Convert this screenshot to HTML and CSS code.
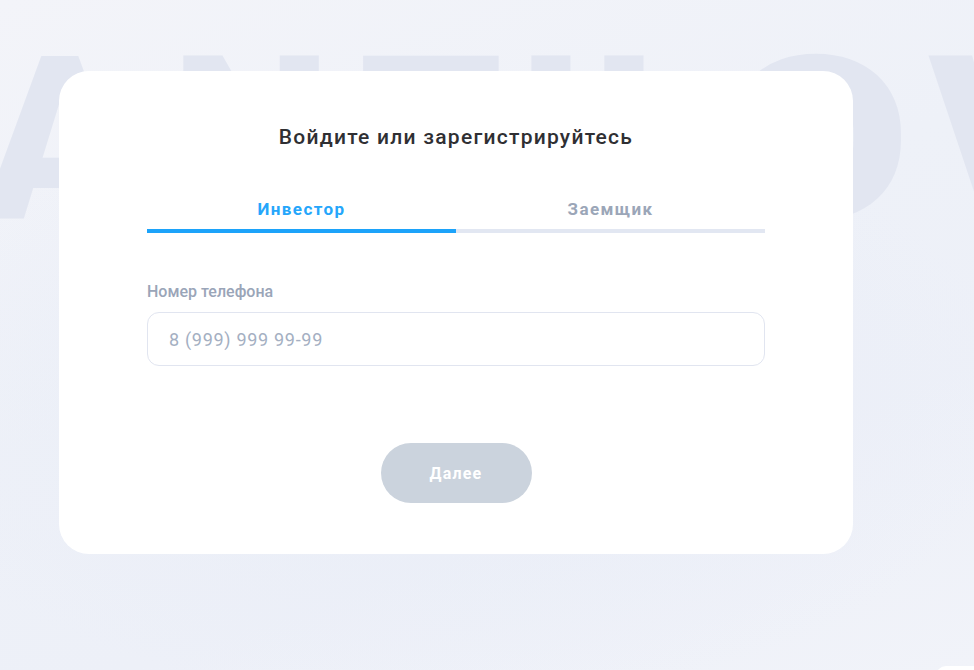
FILE: index.html
```html
<!DOCTYPE html>
<html lang="ru">
<head>
<meta charset="utf-8">
<title>Вход</title>
<link rel="stylesheet" href="styles.css">
</head>
<body>
<div class="bg-layer" aria-hidden="true">
  <div class="bg-word">
    <span class="l l-a">A</span><span class="l l-n">N</span><span class="l l-t">T</span><span class="l l-i">I</span><span class="l l-l">L</span><span class="l l-o">O</span><span class="l l-v">V</span>
  </div>
  <div class="corner-widget"></div>
</div>
<main class="page">
  <section class="card">
    <h1 class="title">Войдите или зарегистрируйтесь</h1>
    <div class="tabs">
      <div class="tab tab-active">Инвестор</div>
      <div class="tab">Заемщик</div>
    </div>
    <label class="field-label" for="phone">Номер телефона</label>
    <input class="field-input" id="phone" type="text" placeholder="8 (999) 999 99-99">
    <div class="actions">
      <button class="btn-next" type="button">Далее</button>
    </div>
  </section>
</main>
</body>
</html>
```
FILE: styles.css
```css
* { box-sizing: border-box; }
html, body { height: 100%; }
body {
  margin: 0;
  overflow: hidden;
  font-family: Roboto, "Liberation Sans", sans-serif;
  background:
    radial-gradient(ellipse 60% 45% at 45% 60%, #e9edf7 0%, rgba(233,237,247,0) 100%),
    linear-gradient(160deg, #f3f4f9 0%, #eef1f8 45%, #edf0f8 70%, #f1f3f9 100%);
  position: relative;
}
.bg-layer {
  position: absolute;
  inset: 0;
  overflow: hidden;
  pointer-events: none;
}
.bg-word {
  position: absolute;
  top: 17px;
  left: -30px;
  display: flex;
  font-family: Roboto, "Liberation Sans", sans-serif;
  font-weight: 900;
  font-size: 228px;
  line-height: 1;
  color: #e2e6f1;
}
.l { display: block; text-align: center; margin-top: 9px; }
.l-a { width: 180px; }
.l-n { width: 202px; }
.l-t { width: 158px; }
.l-i { width: 82px; }
.l-l { width: 111px; }
.l-o { width: 226px; transform: scaleX(1.2); }
.l-v { width: 120px; }

.corner-widget {
  position: absolute;
  right: -40px;
  bottom: -40px;
  width: 78px;
  height: 44px;
  background: #fff;
  border-radius: 10px;
}

.page {
  position: relative;
  padding: 71px 0 0 59px;
}
.card {
  width: 794px;
  height: 483px;
  background: #fff;
  border-radius: 30px;
  padding: 54px 88px 0;
  display: flex;
  flex-direction: column;
}
.title {
  margin: 0;
  text-align: center;
  font-size: 21px;
  line-height: 24px;
  font-weight: 500;
  color: #2f2f33;
  letter-spacing: 1.25px;
}
.tabs {
  display: flex;
  margin-top: 50px;
}
.tab {
  flex: 1;
  text-align: center;
  font-size: 17px;
  line-height: 20px;
  font-weight: 700;
  color: #9ba6b8;
  letter-spacing: 1.4px;
  padding-bottom: 10px;
  border-bottom: 4px solid #e2e7f2;
}
.tab-active {
  color: #25a6fb;
  border-bottom-color: #1ca3fa;
}
.field-label {
  display: block;
  margin-top: 49px;
  font-size: 16px;
  line-height: 20px;
  font-weight: 500;
  color: #9aa5b8;
}
.field-input {
  margin-top: 10px;
  width: 100%;
  height: 54px;
  border: 1px solid #e1e5f0;
  border-radius: 12px;
  padding: 0 21px;
  font-family: Roboto, "Liberation Sans", sans-serif;
  font-size: 18px;
  letter-spacing: 0.7px;
  color: #333;
  outline: none;
  background: #fff;
}
.field-input::placeholder { color: #a4afc2; }
.actions {
  display: flex;
  justify-content: center;
  margin-top: 77px;
}
.btn-next {
  width: 151px;
  height: 60px;
  border: none;
  border-radius: 30px;
  background: #cbd3dd;
  color: #fff;
  font-family: Roboto, "Liberation Sans", sans-serif;
  font-size: 16px;
  font-weight: 700;
  letter-spacing: 1.2px;
  cursor: default;
}
```
